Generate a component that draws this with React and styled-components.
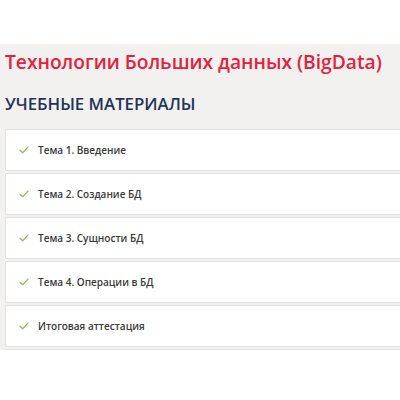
import styled, { createGlobalStyle } from "styled-components";

const Global = createGlobalStyle`
  html, body {
    margin: 0;
    padding: 0;
    background: #ffffff;
  }
  body {
    font-family: "Open Sans", "Liberation Sans", sans-serif;
  }
`;

const Page = styled.div`
  width: 400px;
  height: 400px;
  overflow: hidden;
  background: #ffffff;
  padding-top: 44px;
  box-sizing: border-box;
`;

const Section = styled.div`
  background: #f2f1ef;
  padding: 4px 0 0 5px;
  height: 306px;
  box-sizing: border-box;
  overflow: hidden;
`;

const Title = styled.h1`
  margin: 0;
  color: #e5213f;
  font-size: 19.2px;
  font-weight: 600;
  line-height: 28px;
  white-space: nowrap;
`;

const Subtitle = styled.h2`
  margin: 16px 0 0;
  color: #1e3557;
  font-size: 16.8px;
  font-weight: 600;
  line-height: 24px;
`;

const List = styled.div`
  display: flex;
  flex-direction: column;
  gap: 2px;
  margin-top: 13px;
`;

const Item = styled.div`
  display: flex;
  align-items: center;
  gap: 9px;
  height: 40px;
  padding-left: 13px;
  background: #ffffff;
  border: 1px solid #e2e2e0;
  border-right: none;
  border-radius: 2px 0 0 2px;
`;

const Label = styled.span`
  font-size: 10px;
  font-weight: 600;
  color: #3a3a3a;
`;

const Check = () => (
  <svg width="10" height="8" viewBox="0 0 11 9" fill="none">
    <path d="M1 4.8 L4 7.6 L10 1.2" stroke="#8cc152" strokeWidth="1.4" strokeLinecap="round" strokeLinejoin="round" />
  </svg>
);

const items = [
  "Тема 1. Введение",
  "Тема 2. Создание БД",
  "Тема 3. Сущности БД",
  "Тема 4. Операции в БД",
  "Итоговая аттестация",
  "",
];

export default function App() {
  return (
    <Page>
      <Global />
      <Section>
        <Title>Технологии Больших данных (BigData)</Title>
        <Subtitle>УЧЕБНЫЕ МАТЕРИАЛЫ</Subtitle>
        <List>
          {items.map((text, i) => (
            <Item key={i}>
              {text && <Check />}
              {text && <Label>{text}</Label>}
            </Item>
          ))}
        </List>
      </Section>
    </Page>
  );
}
